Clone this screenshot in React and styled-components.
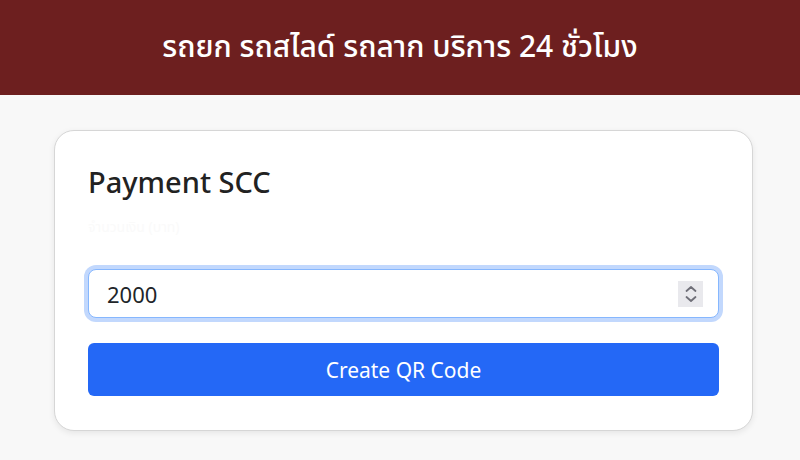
import React, { useState } from "react";
import styled, { createGlobalStyle } from "styled-components";

const GlobalStyle = createGlobalStyle`
  body {
    margin: 0;
    background: #f8f8f8;
    font-family: "Noto Sans", "Noto Sans Thai", "Noto Sans CJK SC", sans-serif;
    color: #212529;
  }
`;

const Header = styled.header`
  height: 95px;
  display: flex;
  align-items: center;
  justify-content: center;
  background: #6d1f1f;
  color: #fff;
  font-size: 30px;
  font-weight: 500;
`;

const Main = styled.main`
  padding: 35px 47px 30px 54px;
`;

const Card = styled.section`
  max-width: 700px;
  box-sizing: border-box;
  padding: 31px 33px 34px;
  background: #fff;
  border: 1px solid #d6d6d6;
  border-radius: 20px;
  box-shadow: 0 2px 6px rgba(0, 0, 0, 0.08);
`;

const Title = styled.h2`
  margin: 0 0 16px;
  font-size: 29px;
  font-weight: 500;
  color: #222;
`;

const Label = styled.label`
  display: block;
  margin-bottom: 31px;
  font-size: 14px;
  color: #fafafa;
`;

const Field = styled.div`
  position: relative;
`;

const Input = styled.input`
  width: 100%;
  box-sizing: border-box;
  height: 49px;
  padding: 0 18px;
  font: inherit;
  font-size: 22px;
  color: #212529;
  border: 1px solid #86b7fe;
  border-radius: 8px;
  outline: none;
  box-shadow: 0 0 0 4px #c2d8fd;
  -moz-appearance: textfield;
  &::-webkit-outer-spin-button,
  &::-webkit-inner-spin-button {
    -webkit-appearance: none;
    margin: 0;
  }
`;

const Spinner = styled.span`
  position: absolute;
  right: 16px;
  top: 50%;
  transform: translateY(-50%);
  width: 25px;
  height: 26px;
  display: flex;
  align-items: center;
  justify-content: center;
  background: #e9e9ed;
`;

const Button = styled.button`
  display: block;
  width: 100%;
  height: 53px;
  margin-top: 25px;
  border: none;
  border-radius: 6px;
  background: #2468f6;
  color: #fff;
  font: inherit;
  font-size: 21px;
  cursor: pointer;
`;

export default function App() {
  const [amount, setAmount] = useState("2000");

  return (
    <>
      <GlobalStyle />
      <Header>รถยก รถสไลด์ รถลาก บริการ 24 ชั่วโมง</Header>
      <Main>
        <Card>
          <Title>Payment SCC</Title>
          <Label htmlFor="amount">จำนวนเงิน (บาท)</Label>
          <Field>
            <Input
              id="amount"
              type="number"
              value={amount}
              onChange={e => setAmount(e.target.value)}
            />
            <Spinner>
              <svg width="14" height="20" viewBox="0 0 14 20" fill="none" stroke="#6f6f78" strokeWidth="1.8" strokeLinecap="round" strokeLinejoin="round">
                <path d="M2.5 7 L7 3 L11.5 7" />
                <path d="M2.5 13 L7 17 L11.5 13" />
              </svg>
            </Spinner>
          </Field>
          <Button>Create QR Code</Button>
        </Card>
      </Main>
    </>
  );
}
